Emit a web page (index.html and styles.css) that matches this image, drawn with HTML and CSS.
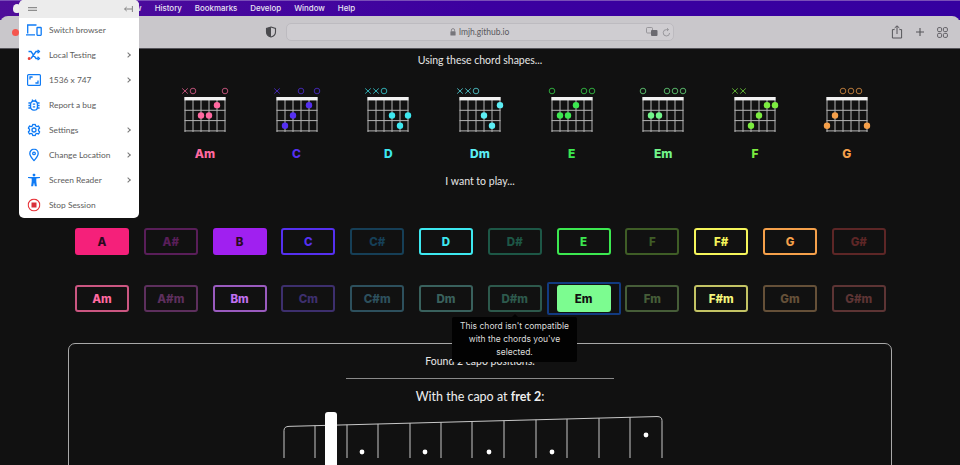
FILE: index.html
```html
<!DOCTYPE html>
<html lang="en">
<head>
  <meta charset="UTF-8" />
  <meta name="viewport" content="width=device-width, initial-scale=1" />
  <title>Capo Chord Finder</title>
  <link rel="stylesheet" href="styles.css">
</head>
<body>
  <!-- mac menu bar -->
  <div class="menubar">
    <span class="apple"></span>
    <nav class="menus">
      <span class="menu-view">View</span>
      <span>History</span>
      <span>Bookmarks</span>
      <span>Develop</span>
      <span>Window</span>
      <span>Help</span>
    </nav>
  </div>

  <!-- safari toolbar -->
  <div class="toolbar">
    <span class="traffic-red"></span>
    <svg class="shield" width="12" height="12" viewBox="0 0 12 12"><path d="M6 1 L10.5 2.5 V6 C10.5 8.6 8.4 10.3 6 11 C3.6 10.3 1.5 8.6 1.5 6 V2.5 Z" fill="none" stroke="#4a4a4e" stroke-width="1.1"/><path d="M6 1 V11 C3.6 10.3 1.5 8.6 1.5 6 V2.5 Z" fill="#4a4a4e"/></svg>
    <div class="address">
      <span class="url"><svg width="6" height="8" viewBox="0 0 6 8"><path d="M1.4 3.4 V2.2 A1.6 1.6 0 0 1 4.6 2.2 V3.4" fill="none" stroke="#77767b" stroke-width="0.8"/><rect x="0.4" y="3.3" width="5.2" height="4.2" rx="0.6" fill="#77767b"/></svg> lmjh.github.io</span>
      <span class="address-tools">
        <svg width="12" height="10" viewBox="0 0 12 10"><rect x="0.5" y="0.5" width="6" height="5.5" rx="1" fill="none" stroke="#8a898e" stroke-width="0.8"/><rect x="5" y="3" width="6.5" height="6" rx="1" fill="#6b6a70"/></svg>
        <svg width="9" height="9" viewBox="0 0 9 9"><path d="M7.6 5 A3.2 3.2 0 1 1 4.5 1.6 H6" fill="none" stroke="#8a898e" stroke-width="0.8"/><path d="M5 0.2 L6.6 1.6 L5 3" fill="none" stroke="#8a898e" stroke-width="0.8"/></svg>
      </span>
    </div>
    <div class="toolbar-right">
      <svg width="12" height="14" viewBox="0 0 12 14"><path d="M3.6 4.6 H1.4 V13 H10.6 V4.6 H8.4 M6 9 V1 M3.6 3 L6 0.8 L8.4 3" fill="none" stroke="#56555a" stroke-width="1"/></svg>
      <svg width="10" height="10" viewBox="0 0 10 10"><path d="M5 1 V9 M1 5 H9" fill="none" stroke="#56555a" stroke-width="1.1"/></svg>
      <svg width="11" height="11" viewBox="0 0 11 11" fill="none" stroke="#56555a" stroke-width="0.9"><rect x="0.6" y="0.6" width="4" height="4" rx="1.2"/><rect x="6.4" y="0.6" width="4" height="4" rx="1.2"/><rect x="0.6" y="6.4" width="4" height="4" rx="1.2"/><rect x="6.4" y="6.4" width="4" height="4" rx="1.2"/></svg>
    </div>
  </div>

  <!-- the page itself -->
  <main class="page">
    <p class="lead lead-shapes">Using these chord shapes...</p>
    <div class="shapes" id="shapes"></div>
    <p class="lead lead-play">I want to play...</p>

    <div class="keys" id="keysMajor"></div>
    <div class="keys keys-minor" id="keysMinor"></div>

    <section class="results">
      <p class="found">Found 2 capo positions.</p>
      <hr class="divider" />
      <h2 class="capo-title">With the capo at <b>fret 2</b>:</h2>
      <svg class="fretboard" width="384" height="50" viewBox="0 0 384 50" id="fretboard"></svg>
      <span class="capo"></span>
    </section>

    <div class="tooltip">This chord isn't compatible with the chords you've selected.</div>
  </main>

  <!-- browserstack panel -->
  <aside class="panel">
    <div class="panel-head">
      <svg width="9" height="4" viewBox="0 0 9 4"><path d="M0 0.7 H9 M0 3.3 H9" stroke="#777" stroke-width="1"/></svg>
      <svg width="9" height="6" viewBox="0 0 9 6"><path d="M8.4 0 V6 M8 3 H0.6 M2.7 1 L0.6 3 L2.7 5" fill="none" stroke="#777" stroke-width="0.9"/></svg>
    </div>
    <div class="panel-row">
      <svg width="16" height="12" viewBox="0 0 16 12" fill="none" stroke="#0f7bf5" stroke-width="1.3"><path d="M1.7 9.5 V1 H10.5 M0 10.8 H9"/><rect x="11" y="3.5" width="4.2" height="7.8" rx="0.5"/></svg>
      <span>Switch browser</span>
    </div>
    <div class="panel-row">
      <svg width="13" height="11" viewBox="0 0 13 11" fill="none" stroke="#0f7bf5" stroke-width="1.3"><path d="M1 2 H3.5 L8.5 9 H11 M3.5 9 L8.5 2 H11"/><path d="M10 0.3 L12 2 L10 3.7 M10 7.3 L12 9 L10 10.7"/><circle cx="1.7" cy="9" r="1.6" fill="#e8403a" stroke="none"/></svg>
      <span>Local Testing</span><i class="chev"></i>
    </div>
    <div class="panel-row">
      <svg width="14" height="12" viewBox="0 0 14 12" fill="none" stroke="#0f7bf5" stroke-width="1.2"><rect x="0.6" y="0.6" width="12.8" height="10.8" rx="1"/><path d="M3 5.4 V3 H5.6 M11 6.6 V9 H8.4" stroke-width="1.3"/></svg>
      <span>1536 x 747</span><i class="chev"></i>
    </div>
    <div class="panel-row">
      <svg width="12" height="12" viewBox="0 0 12 12" fill="none" stroke="#0f7bf5" stroke-width="1.3"><rect x="2.6" y="2" width="6.8" height="9.2" rx="3.2"/><path d="M4 0.6 L5 2 M8 0.6 L7 2 M0.4 4 H2.6 M9.4 4 H11.6 M0.4 6.5 H2.6 M9.4 6.5 H11.6 M0.4 9 H2.8 M9.2 9 H11.6 M4.8 5.2 H7.2 M4.8 7.8 H7.2"/></svg>
      <span>Report a bug</span>
    </div>
    <div class="panel-row">
      <svg width="13" height="13" viewBox="0 0 13 13" fill="none" stroke="#0f7bf5" stroke-width="1.3"><path d="M5.3 0.8 H7.7 L8 2.4 L9.4 3.1 L11 2.6 L12.2 4.6 L11 5.7 V7.3 L12.2 8.4 L11 10.4 L9.4 9.9 L8 10.6 L7.7 12.2 H5.3 L5 10.6 L3.6 9.9 L2 10.4 L0.8 8.4 L2 7.3 V5.7 L0.8 4.6 L2 2.6 L3.6 3.1 L5 2.4 Z"/><circle cx="6.5" cy="6.5" r="2"/></svg>
      <span>Settings</span><i class="chev"></i>
    </div>
    <div class="panel-row">
      <svg width="10" height="13" viewBox="0 0 10 13" fill="none" stroke="#0f7bf5" stroke-width="1.3"><path d="M5 12.2 C3 9.6 0.8 7.4 0.8 4.9 A4.2 4.2 0 0 1 9.2 4.9 C9.2 7.4 7 9.6 5 12.2 Z"/><circle cx="5" cy="4.9" r="1.3"/></svg>
      <span>Change Location</span><i class="chev"></i>
    </div>
    <div class="panel-row">
      <svg width="13" height="13" viewBox="0 0 13 13"><circle cx="6.5" cy="1.5" r="1.4" fill="#0f7bf5"/><path d="M0.5 3.4 H12.5 V4.6 L8.8 5.1 V8 L9.4 13 H7.4 L6.5 9 L5.6 13 H3.6 L4.2 8 V5.1 L0.5 4.6 Z" fill="#0f7bf5"/></svg>
      <span>Screen Reader</span><i class="chev"></i>
    </div>
    <div class="panel-row">
      <svg width="13" height="13" viewBox="0 0 13 13"><circle cx="6.5" cy="6.5" r="5.8" fill="none" stroke="#e8343a" stroke-width="1.2"/><rect x="4" y="4" width="5" height="5" fill="#d9303a"/></svg>
      <span>Stop Session</span>
    </div>
  </aside>

  <script>
    // chord diagrams: fret per string (-1 muted, 0 open)
    const shapes = [
      { name: 'Am', color: '#ff69a0', frets: [-1, 0, 2, 2, 1, 0] },
      { name: 'C', color: '#5530f0', frets: [-1, 3, 2, 0, 1, 0] },
      { name: 'D', color: '#3de8f0', frets: [-1, -1, 0, 2, 3, 2] },
      { name: 'Dm', color: '#5ceef5', frets: [-1, -1, 0, 2, 3, 1] },
      { name: 'E', color: '#3ce850', frets: [0, 2, 2, 1, 0, 0] },
      { name: 'Em', color: '#72f58a', frets: [0, 2, 2, 0, 0, 0] },
      { name: 'F', color: '#7ceb40', frets: [-1, -1, 3, 2, 1, 1] },
      { name: 'G', color: '#f5a04a', frets: [3, 2, 0, 0, 0, 3] }
    ];

    function drawShape(shape) {
      const sx = 5, sy = 12, w = 40, h = 35;
      const stringGap = w / 5;
      const fretGap = 10.3;
      let out = '';
      shape.frets.forEach((fret, i) => {
        const x = sx + i * stringGap;
        out += `<line x1="${x}" y1="${sy}" x2="${x}" y2="${sy + h}" stroke="#b5b5b5" stroke-width="1"/>`;
      });
      [1, 2, 3].forEach(f => {
        const y = sy + 3 + f * fretGap;
        out += `<line x1="${sx - 0.5}" y1="${y}" x2="${sx + w + 0.5}" y2="${y}" stroke="#b5b5b5" stroke-width="1"/>`;
      });
      out += `<rect x="${sx - 0.5}" y="${sy}" width="${w + 1}" height="3.4" fill="#f2f2f2"/>`;
      shape.frets.forEach((fret, i) => {
        const x = sx + i * stringGap;
        if (fret === -1) {
          out += `<path d="M${x - 2.8} 3.4 L${x + 2.8} 8.6 M${x + 2.8} 3.4 L${x - 2.8} 8.6" stroke="${shape.color}" stroke-opacity="0.7" fill="none"/>`;
        } else if (fret === 0) {
          out += `<circle cx="${x}" cy="6" r="2.8" stroke="${shape.color}" stroke-opacity="0.7" fill="none"/>`;
        } else {
          out += `<circle cx="${x}" cy="${sy + 3 + (fret - 0.5) * fretGap}" r="3.2" fill="${shape.color}"/>`;
        }
      });
      return `<svg width="50" height="48" viewBox="0 0 50 48">${out}</svg>`;
    }

    const shapesEl = document.getElementById('shapes');
    shapes.forEach(shape => {
      const item = document.createElement('div');
      item.className = 'shape';
      item.innerHTML = drawShape(shape) + `<span class="shape-name" style="color:${shape.color}">${shape.name}</span>`;
      shapesEl.appendChild(item);
    });

    // on = bright outline, off = dimmed because it is not compatible
    const keysMajor = [
      ['A', '#f5207a', 'filled'], ['A#', '#a02ba0', 'off'], ['B', '#a020f0', 'filled'], ['C', '#5530f0', 'on'],
      ['C#', '#1c6e9c', 'off'], ['D', '#3de8f0', 'on'], ['D#', '#2a9c7c', 'off'], ['E', '#3ce850', 'on'],
      ['F', '#6ea83c', 'off'], ['F#', '#f5f55a', 'on'], ['G', '#f5a04a', 'on'], ['G#', '#a83c3c', 'off']
    ];
    const keysMinor = [
      ['Am', '#ff69a0', 'on'], ['A#m', '#a84ea8', 'off'], ['Bm', '#c070f0', 'on'], ['Cm', '#6a4ec8', 'off'],
      ['C#m', '#4a90a8', 'off'], ['Dm', '#62b0a8', 'off'], ['D#m', '#4aa088', 'off'], ['Em', '#7cfc90', 'selected'],
      ['Fm', '#7ca860', 'off'], ['F#m', '#f5f57c', 'on'], ['Gm', '#b89060', 'off'], ['G#m', '#a85858', 'off']
    ];

    function addKeys(id, keys) {
      const row = document.getElementById(id);
      keys.forEach(([name, color, state]) => {
        const b = document.createElement('button');
        b.className = 'key key-' + state;
        b.style.setProperty('--key', color);
        b.textContent = name;
        row.appendChild(b);
      });
    }
    addKeys('keysMajor', keysMajor);
    addKeys('keysMinor', keysMinor);

    // fretboard, drawn slightly in perspective
    const fretXs = [3, 34, 66, 97, 129, 160, 191, 223, 255, 286, 318, 349, 381];
    const topY = x => 18.5 - (x / 378) * 10;
    let board = `<path d="M3 50 V${topY(0) + 4} Q3 ${topY(0)} 8 ${topY(5)} L376 ${topY(376)} Q381 ${topY(378)} 381 ${topY(378) + 4} V50" fill="none" stroke="#c8c8c8"/>`;
    fretXs.slice(1, -1).forEach(x => {
      board += `<line x1="${x}" y1="${topY(x)}" x2="${x}" y2="50" stroke="#c8c8c8"/>`;
    });
    [[81, 44], [144, 44], [208, 44], [271, 44], [365, 27]].forEach(([x, y]) => {
      board += `<circle cx="${x}" cy="${y}" r="2.4" fill="#fff"/>`;
    });
    document.getElementById('fretboard').innerHTML = board;
  </script>
</body>
</html>
```

FILE: styles.css
```css
* {
  box-sizing: border-box;
}
html, body {
  margin: 0;
  height: 465px;
  overflow: hidden;
}
body {
  position: relative;
  background-color: #c9c7cb;
  font-family: 'Lato', sans-serif;
  color: #eee;
}

/* menu bar */
.menubar {
  display: flex;
  align-items: center;
  height: 20px;
  margin-bottom: -4px;
  padding-bottom: 5px;
  background: linear-gradient(90deg, #4f0e9a, #3c00a0 50%, #3500a0);
  border-top: 1px solid #7a4fb8;
  color: #e8e4f2;
  font-family: 'Inter', sans-serif;
  font-size: 7.9px;
  font-weight: 500;
}
.apple {
  width: 8px;
  height: 9px;
  margin-left: 13px;
  border-radius: 50% 50% 45% 45%;
  background: #eee;
}
.menus {
  display: flex;
  gap: 13px;
  margin-left: 102px;
}

/* browser toolbar */
.toolbar {
  display: flex;
  align-items: center;
  height: 33px;
  background: #c9c7cb;
  border-bottom: 1px solid #55545a;
  border-radius: 8px 8px 0 0;
  position: relative;
  z-index: 1;
}
.traffic-red {
  width: 7px;
  height: 7px;
  margin-left: 12px;
  border-radius: 50%;
  background: #f5564e;
}
.shield {
  margin-left: 246px;
}
.address {
  display: flex;
  align-items: center;
  justify-content: flex-end;
  position: relative;
  width: 388px;
  height: 18px;
  margin-left: 9px;
  padding-right: 2px;
  border: 1px solid #bdbbc0;
  border-radius: 5px;
  background: #cfcdd1;
}
.url {
  position: absolute;
  left: 163px;
  font-size: 8.5px;
  color: #5a595e;
  display: flex;
  align-items: center;
  gap: 3px;
}
.address-tools {
  display: flex;
  align-items: center;
  gap: 4px;
}
.toolbar-right {
  display: flex;
  align-items: center;
  gap: 12px;
  margin-left: 217px;
}

/* page */
.page {
  position: relative;
  height: 416px;
  background-color: #111;
  overflow: hidden;
}
.lead {
  margin: 0;
  text-align: center;
  font-size: 10.5px;
  line-height: 14px;
  color: #e6e6e6;
}
.lead-shapes {
  padding-top: 4px;
}
.lead-play {
  margin-top: 13px;
}
.shapes {
  display: grid;
  grid-template-columns: repeat(8, 91.7px);
  margin: 18px 0 0 159px;
}
.shape {
  display: flex;
  flex-direction: column;
  align-items: center;
}
.shape-name {
  margin-top: 14px;
  font-family: 'Inter', sans-serif;
  font-size: 12px;
  font-weight: 800;
  line-height: 14px;
}

/* key buttons */
.keys {
  display: flex;
  gap: 14.8px;
  padding-left: 75px;
  margin-top: 30px;
}
.lead-play + .keys {
  margin-top: 40px;
}
.key {
  position: relative;
  width: 54px;
  height: 27px;
  padding: 0;
  border: 2px solid var(--key);
  border-radius: 3px;
  background: transparent;
  color: var(--key);
  font-family: 'Inter', sans-serif;
  font-size: 11.5px;
  font-weight: 800;
}
.keys-minor .key-on {
  border-color: color-mix(in srgb, var(--key) 78%, #111);
}
.key-filled {
  background: var(--key);
  color: #2a0a20;
}
.key-off {
  opacity: 0.5;
}
.key-selected {
  background: var(--key);
  color: #111;
}
.key-selected::after {
  content: '';
  position: absolute;
  inset: -5px -12px;
  border: 2px solid #123a80;
  border-radius: 2px;
}

/* result box */
.results {
  position: relative;
  display: flex;
  flex-direction: column;
  align-items: center;
  height: 160px;
  margin: 31px 68px 0;
  border: 1px solid #a8a8a8;
  border-radius: 7px;
}
.found {
  margin: 10px 0 0;
  font-size: 10.5px;
  line-height: 14px;
  color: #e6e6e6;
}
.divider {
  width: 268px;
  margin: 10px 0 0;
  border: 0;
  border-top: 1px solid #8a8a8a;
}
.capo-title {
  margin: 9px 0 0;
  font-size: 12.5px;
  font-weight: 400;
  line-height: 17px;
  color: #eee;
}
.fretboard {
  margin: 3px 14px 0 0;
}
.capo {
  position: absolute;
  left: 256px;
  top: 68px;
  width: 12px;
  height: 60px;
  border-radius: 3px;
  background: #fff;
}

/* tooltip over the key buttons */
.tooltip {
  position: absolute;
  left: 452px;
  top: 268px;
  width: 125px;
  padding: 3px 8px;
  background: #020202;
  border-radius: 2px;
  font-family: 'Inter', sans-serif;
  font-size: 8.5px;
  line-height: 13px;
  text-align: center;
  color: #ddd;
}
.tooltip::before {
  content: '';
  position: absolute;
  left: 60px;
  top: -3px;
  border: 3px solid transparent;
  border-top: 0;
  border-bottom-color: #020202;
}

/* side panel */
.panel {
  position: absolute;
  left: 19px;
  top: 0;
  width: 120px;
  height: 218px;
  background: #fff;
  border-radius: 5px;
  color: #5c5c5c;
  font-size: 8.4px;
  z-index: 5;
}
.panel-head {
  display: flex;
  align-items: center;
  justify-content: space-between;
  height: 17.5px;
  padding: 0 6px 0 9px;
  background: #ececec;
  border-radius: 5px 5px 0 0;
}
.panel-row {
  position: relative;
  display: flex;
  align-items: center;
  height: 25px;
}
.panel-row svg {
  position: absolute;
  left: 15px;
  top: 50%;
  transform: translate(-50%, -50%);
}
.panel-row span {
  margin-left: 30px;
}
.chev {
  position: absolute;
  right: 9px;
  width: 4px;
  height: 4px;
  border-top: 1px solid #777;
  border-right: 1px solid #777;
  transform: rotate(45deg);
}
```
